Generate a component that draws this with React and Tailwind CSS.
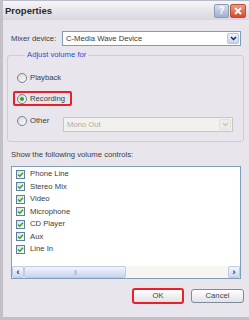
import React from 'react';

const controls = ['Phone Line', 'Stereo Mix', 'Video', 'Microphone', 'CD Player', 'Aux', 'Line In'];

const Chevron = ({ color = '#1e2a44' }) => (
  <svg width="7" height="5" viewBox="0 0 7 5">
    <path d="M1 1 L3.5 3.5 L6 1" fill="none" stroke={color} strokeWidth="1.5" />
  </svg>
);

const Radio = ({ checked }) => (
  <span className="flex h-[10px] w-[10px] shrink-0 items-center justify-center rounded-full border border-[#6d819f] bg-gradient-to-br from-[#d8d6d0] to-white">
    {checked && <span className="h-[4px] w-[4px] rounded-full bg-[#2ba32b]" />}
  </span>
);

const Check = () => (
  <span className="flex h-[9px] w-[9px] shrink-0 items-center justify-center border border-[#5f7ea3] bg-gradient-to-br from-[#dedcd6] to-white">
    <svg width="7" height="7" viewBox="0 0 7 7">
      <path d="M1 3.5 L2.8 5.3 L6 1.8" fill="none" stroke="#2aa52a" strokeWidth="1.4" />
    </svg>
  </span>
);

const Select = ({ value, disabled, className }) => (
  <div
    className={`flex h-[15px] items-center border ${
      disabled ? 'border-[#c9c7ba] bg-[#f3f1ef] text-[#b0ad9f]' : 'border-[#7f9db9] bg-white text-[#3a3a3a]'
    } ${className}`}
  >
    <span className="flex-1 pl-[3px]">{value}</span>
    <span
      className={`m-[1px] flex h-[11px] w-[12px] items-center justify-center rounded-[2px] border ${
        disabled ? 'border-[#e2e0dc] bg-[#eeece8]' : 'border-[#b3c3e3] bg-gradient-to-b from-[#f1f4fc] to-[#c5d2ee]'
      }`}
    >
      <Chevron color={disabled ? '#c9c7ba' : '#1e2a44'} />
    </span>
  </div>
);

export default function App() {
  return (
    <div
      className="flex h-[320px] w-[249px] flex-col overflow-hidden border-b-[3px] border-l-[3px] border-[#c4c0c8] bg-[#e9e5ec] text-[7.7px] leading-[10px] text-[#3c3c3c]"
      style={{ fontFamily: '"Liberation Sans", Arial, sans-serif' }}
    >
      {/* Title bar */}
      <div className="-ml-[3px] flex h-[20px] shrink-0 items-center border-t border-[#b8bcc8] bg-gradient-to-b from-[#f6f6f8] to-[#d7d7dd] pl-[5px] pr-[3px]">
        <span className="flex-1 text-[9.5px] font-bold text-[#2a2a2a]">Properties</span>
        <span className="mr-[1px] flex h-[14px] w-[15px] items-center justify-center rounded-[2px] border border-[#8d9bb6] bg-gradient-to-b from-[#d7e0ef] to-[#9fb0cf] text-[10px] font-bold text-white">
          ?
        </span>
        <span className="flex h-[14px] w-[16px] items-center justify-center rounded-[2px] border border-[#b1523a] bg-gradient-to-b from-[#ee9a82] to-[#d6492a]">
          <svg width="8" height="8" viewBox="0 0 8 8">
            <path d="M1 1 L7 7 M7 1 L1 7" stroke="white" strokeWidth="1.8" />
          </svg>
        </span>
      </div>

      <div className="flex flex-1 flex-col pl-[4px] pr-[5px]">
        {/* Mixer device */}
        <div className="mt-[11px] flex items-center pl-[4px]">
          <span className="w-[51px]">Mixer device:</span>
          <Select value="C-Media Wave Device" className="w-[179px]" />
        </div>

        {/* Adjust volume for */}
        <fieldset className="mt-[4px] h-[92px] rounded-[3px] border border-[#cfccd4] pl-[9px] pr-[8px]">
          <legend className="ml-[8px] px-[2px] text-[#2a4fd0]">Adjust volume for</legend>
          <div className="mt-[13px] flex items-center gap-[3px]">
            <Radio />
            <span>Playback</span>
          </div>
          <div className="-ml-[4px] mt-[8px] flex h-[15px] w-[59px] items-center gap-[3px] rounded-[2px] border-2 border-[#e8202a] pl-[2px]">
            <Radio checked />
            <span>Recording</span>
          </div>
          <div className="mt-[11px] flex items-start">
            <div className="mt-[-1px] flex w-[46px] items-center gap-[3px]">
              <Radio />
              <span>Other</span>
            </div>
            <Select value="Mono Out" disabled className="w-[170px]" />
          </div>
        </fieldset>

        {/* Volume controls */}
        <div className="mt-[8px] pl-[4px]">Show the following volume controls:</div>
        <div className="ml-[4px] mt-[6px] flex h-[113px] w-[230px] flex-col border border-[#7f9db9] bg-white">
          <div className="flex-1 pt-[1px]">
            {controls.map((c) => (
              <div key={c} className="flex h-[12.5px] items-center gap-[5px] pl-[4px]">
                <Check />
                <span>{c}</span>
              </div>
            ))}
          </div>
          <div className="flex h-[12px] items-stretch bg-[#f6f5f2]">
            <span className="flex w-[12px] items-center justify-center rounded-[2px] border border-[#bfcbe4] bg-gradient-to-b from-[#f4f6fb] to-[#cdd8ee] text-[9px] font-bold leading-none text-[#1e2a44]">
              ‹
            </span>
            <span className="flex w-[102px] items-center justify-center rounded-[2px] border border-[#bfcbe4] bg-gradient-to-b from-[#f2f5fc] to-[#c9d5ef]">
              <span className="text-[6px] leading-none tracking-[-1px] text-[#9aa9c8]">|||</span>
            </span>
            <span className="flex-1" />
            <span className="flex w-[12px] items-center justify-center rounded-[2px] border border-[#bfcbe4] bg-gradient-to-b from-[#f4f6fb] to-[#cdd8ee] text-[9px] font-bold leading-none text-[#1e2a44]">
              ›
            </span>
          </div>
        </div>

        {/* Buttons */}
        <div className="mt-[9px] flex items-center justify-end gap-[7px]">
          <button className="flex h-[16px] w-[52px] items-center justify-center rounded-[3px] border-2 border-[#e8202a] bg-gradient-to-b from-white to-[#e4e2e4] text-[7.7px] text-[#444]">
            OK
          </button>
          <button className="flex h-[14px] w-[53px] items-center justify-center rounded-[3px] border border-[#7a8ba8] bg-gradient-to-b from-white to-[#e4e2e4] text-[7.7px] text-[#444]">
            Cancel
          </button>
        </div>
      </div>
    </div>
  );
}
